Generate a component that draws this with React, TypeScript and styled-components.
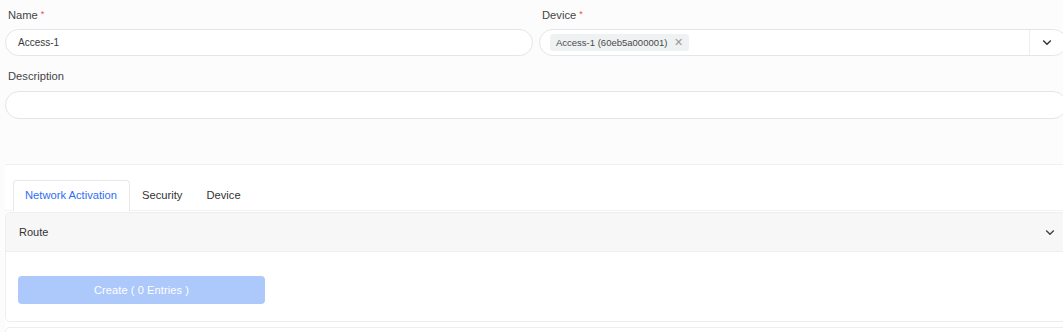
import React from 'react';
import styled, { createGlobalStyle } from 'styled-components';

const GlobalStyle = createGlobalStyle`
  html, body {
    margin: 0;
    padding: 0;
    background: #fcfcfd;
    overflow: hidden;
  }
  body {
    font-family: "Liberation Sans", Arial, sans-serif;
    color: #333;
  }
`

const Page = styled.div`
  width: 1062px;
  padding-left: 5px;
`

const Form = styled.div`
  display: flex;
  flex-direction: column;
  gap: 11px;
  padding-top: 5px;
  padding-bottom: 45px;
`

const Row = styled.div<{cols:number}>`
  display: grid;
  grid-template-columns: repeat(${({cols})=>cols}, 1fr);
  column-gap: 6px;
`

const Field = styled.div`
  display: flex;
  flex-direction: column;
`

const Label = styled.label`
  font-size: 11.2px;
  line-height: 18px;
  height: 18px;
  margin-bottom: 6px;
  padding-left: 3px;
  color: #454545;
`

const Required = styled.span`
  color: #f04a4a;
  font-size: 9px;
  margin-left: 3px;
  vertical-align: 2px;
`

const Input = styled.div<{tall?:boolean}>`
  box-sizing: border-box;
  height: ${({tall})=> tall ? '28px' : '27px'};
  border: 1px solid #e3e5ea;
  border-radius: 14px;
  background: #fff;
  display: flex;
  align-items: center;
  padding-left: 12px;
  font-size: 10px;
  color: #3a3a3a;
`

const Select = styled(Input)`
  padding-left: 10px;
  padding-right: 0;
`

const TagArea = styled.div`
  flex: 1;
  display: flex;
  align-items: center;
`

const Tag = styled.span`
  display: inline-flex;
  align-items: center;
  height: 17px;
  padding: 0 6px 0 6px;
  background: #eef2f3;
  border-radius: 3px;
  font-size: 9.5px;
  color: #4a4a4a;
  gap: 7px;
`

const TagClose = styled.span`
  color: #999;
  font-size: 11px;
  line-height: 1;
`

const SelectArrow = styled.div`
  width: 34px;
  align-self: stretch;
  border-left: 1px solid #eceef1;
  display: flex;
  align-items: center;
  justify-content: center;
  padding-right: 2px;
`

const Content = styled.div`
  background: #fff;
  border-top: 1px solid #eff0f3;
  padding-top: 14px;
`

const TabList = styled.div`
  display: flex;
  align-items: flex-end;
  padding-left: 8px;
  border-bottom: 1px solid #f1f2f4;
  height: 31px;
`

const Tab = styled.div<{active?:boolean}>`
  box-sizing: border-box;
  height: 31px;
  display: flex;
  align-items: center;
  font-size: 11.2px;
  ${({active})=> active ? `
    padding: 0 12px 2px 11px;
    color: #2e6ff0;
    background: #fff;
    border: 1px solid #e6e8ec;
    border-bottom: none;
    border-radius: 4px 4px 0 0;
    margin-bottom: -1px;
  ` : `
    padding: 0 12px 0 12px;
    color: #333;
  `}
`

const Panel = styled.div`
  margin-top: 1px;
  border: 1px solid #eceef2;
  border-radius: 5px;
  overflow: hidden;
`

const PanelHeader = styled.div`
  height: 38px;
  background: #f7f7f7;
  border-bottom: 1px solid #eceef2;
  display: flex;
  align-items: center;
  justify-content: space-between;
  padding: 0 11px 0 13px;
  font-size: 11px;
  color: #333;
`

const PanelBody = styled.div`
  padding: 24px 12px 17px 12px;
`

const CreateButton = styled.button`
  width: 247px;
  height: 28px;
  border: none;
  border-radius: 4px;
  background: #adc8fa;
  color: #fff;
  font-family: "Liberation Sans", Arial, sans-serif;
  font-size: 11px;
  letter-spacing: 0.1px;
  cursor: not-allowed;
`

const NextPanel = styled.div`
  margin-top: 5px;
  height: 20px;
  border: 1px solid #eceef2;
  border-bottom: none;
  border-radius: 5px 5px 0 0;
`

const Chevron: React.FC<{color?:string}> = ({color = '#444'}) => (
  <svg width="10" height="7" viewBox="0 0 10 7">
    <path d="M1.2 1.5 L5 5.2 L8.8 1.5" fill="none" stroke={color} strokeWidth="1.4" />
  </svg>
)

const App: React.FC = () => {
  return (
    <Page>
      <GlobalStyle />
      <Form>
        <Row cols={2}>
          <Field>
            <Label>Name<Required>*</Required></Label>
            <Input>Access-1</Input>
          </Field>
          <Field>
            <Label>Device<Required>*</Required></Label>
            <Select>
              <TagArea>
                <Tag>Access-1 (60eb5a000001)<TagClose>✕</TagClose></Tag>
              </TagArea>
              <SelectArrow><Chevron color="#333" /></SelectArrow>
            </Select>
          </Field>
        </Row>
        <Row cols={1}>
          <Field>
            <Label>Description</Label>
            <Input tall />
          </Field>
        </Row>
      </Form>
      <Content>
        <TabList>
          <Tab active>Network Activation</Tab>
          <Tab>Security</Tab>
          <Tab>Device</Tab>
        </TabList>
        <Panel>
          <PanelHeader>
            <span>Route</span>
            <Chevron />
          </PanelHeader>
          <PanelBody>
            <CreateButton disabled>Create ( 0 Entries )</CreateButton>
          </PanelBody>
        </Panel>
        <NextPanel />
      </Content>
    </Page>
  )
}

export default App;
